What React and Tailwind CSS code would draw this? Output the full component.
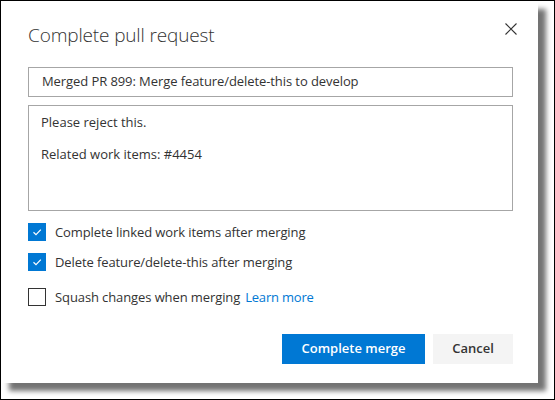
import React from "react";

const Check = () => (
  <svg width="12" height="12" viewBox="0 0 12 12" fill="none">
    <path d="M2.5 6.3 L5 8.6 L9.8 3.6" stroke="white" strokeWidth="1.2" />
  </svg>
);

const CheckRow = ({ checked, label, link, className }) => (
  <label className={`flex items-center ${className}`}>
    {checked ? (
      <span className="w-[18px] h-[18px] bg-[#0078d4] flex items-center justify-center shrink-0">
        <Check />
      </span>
    ) : (
      <span className="w-[18px] h-[18px] border border-[#333] bg-white shrink-0"></span>
    )}
    <span className="ml-[9px] text-[13px] leading-[18px] tracking-[-0.1px] text-[#333]">{label}</span>
    {link && <a className="ml-[5px] text-[13px] leading-[18px] tracking-[-0.2px] text-[#0078d4]">{link}</a>}
  </label>
);

const App = () => {
  return (
    <div className="w-[555px] h-[400px] border border-black bg-white overflow-hidden" style={{ fontFamily: '"Open Sans", "Noto Sans", sans-serif' }}>
      <div className="w-[537px] h-[382px] bg-white shadow-[8px_8px_5px_rgba(0,0,0,0.55)] pl-[27px] pr-[25px] pt-[20px] flex flex-col">
        {/* Header */}
        <div className="flex justify-between items-start">
          <h2 className="text-[19px] leading-[28px] font-light tracking-[-0.15px] text-[#333]">Complete pull request</h2>
          <button className="mt-[2px] mr-[-4px] text-[#333]">
            <svg width="12" height="12" viewBox="0 0 12 12">
              <path d="M0.5 0.5 L11.5 11.5 M11.5 0.5 L0.5 11.5" stroke="#333" strokeWidth="1.1" />
            </svg>
          </button>
        </div>

        {/* Title input */}
        <div className="mt-[18px] h-[30px] border border-[#a6a6a6] flex items-center pl-[13px] text-[13px] tracking-[-0.08px] text-[#333]">
          Merged PR 899: Merge feature/delete-this to develop
        </div>

        {/* Description */}
        <div className="mt-[8px] h-[106px] border border-[#a6a6a6] pl-[12px] pt-[8px] text-[13px] leading-[16px] text-[#333]">
          <p>Please reject this.</p>
          <p>&nbsp;</p>
          <p>Related work items: #4454</p>
        </div>

        {/* Options */}
        <CheckRow className="mt-[12px]" checked label="Complete linked work items after merging" />
        <CheckRow className="mt-[12px]" checked label="Delete feature/delete-this after merging" />
        <CheckRow className="mt-[17px]" label="Squash changes when merging" link="Learn more" />

        {/* Actions */}
        <div className="mt-[28px] flex justify-end gap-[8px]">
          <button className="w-[143px] h-[30px] bg-[#0078d4] text-white text-[13px] font-semibold">Complete merge</button>
          <button className="w-[80px] h-[30px] bg-[#f4f4f4] text-[#333] text-[13px] font-semibold">Cancel</button>
        </div>
      </div>
    </div>
  );
};

export default App;
